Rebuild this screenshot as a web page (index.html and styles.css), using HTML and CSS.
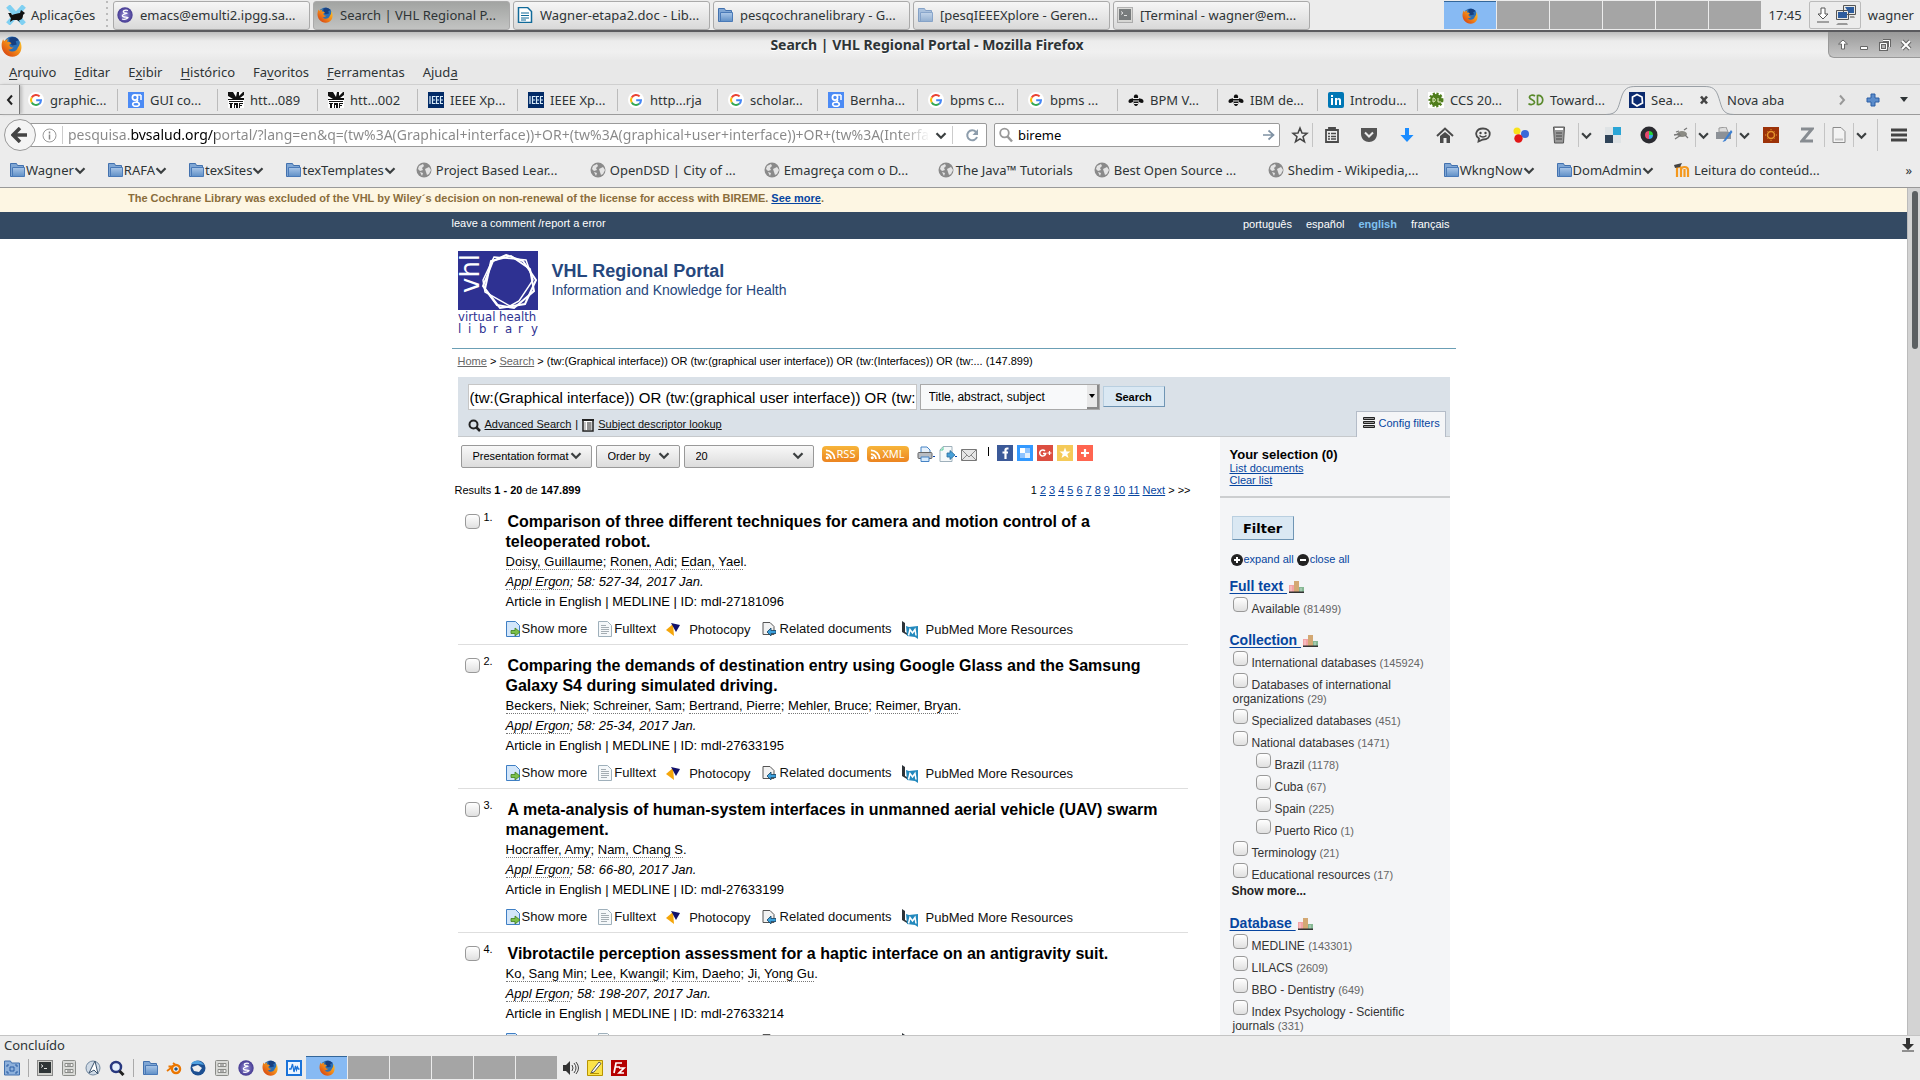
FILE: index.html
```html
<!DOCTYPE html>
<html lang="en">
<head>
<meta charset="utf-8">
<title>Search | VHL Regional Portal</title>
<link rel="stylesheet" href="styles.css">
</head>
<body>
<svg class="defs" aria-hidden="true">
  <defs>
    <linearGradient id="g-fold" x1="0" y1="0" x2="0" y2="1"><stop offset="0" stop-color="#a9c6e8"/><stop offset="1" stop-color="#5f8fc6"/></linearGradient>
    <linearGradient id="g-ff" x1="1" y1="0" x2="0" y2="1"><stop offset="0" stop-color="#ffcf2e"/><stop offset=".5" stop-color="#f08318"/><stop offset="1" stop-color="#cf3210"/></linearGradient>
    <radialGradient id="g-em"><stop offset="0" stop-color="#9a92d8"/><stop offset="1" stop-color="#453a92"/></radialGradient>
  </defs>
  <symbol id="firefox" viewBox="0 0 20 20"><circle cx="10.500" cy="8.500" r="8" fill="#2b6fb5"/><path d="M8 2c3-2 7-1 9 2l-3 1 1 3-4 1-3-2z" fill="#163f80"/><path d="M2 3c-2 4-2 9 1 13 4 5 12 5 15 0 2-3 2-8 0-11 0 3-1 5-2 6-1 4-6 5-9 2 2 0 4-1 5-2-3 0-4-1-4-3l2-1c-1-1-3-2-4-1 0-1 0-2 1-3-2 0-3 1-4 2z" fill="url(#g-ff)"/></symbol>
  <symbol id="folder" viewBox="0 0 16 16"><path d="M1.500 14.500v-13h6l1 2h6v11z" fill="#7fa6d4" stroke="#4271ae"/><path d="M3.500 14.500v-9h12v9z" fill="url(#g-fold)" stroke="#4a7ab8"/></symbol>
  <symbol id="google" viewBox="0 0 16 16"><circle cx="8" cy="8" r="8" fill="#fff"/><g fill="none" stroke-width="2"><path d="M11.600 4.400A5 5 0 0 0 3.700 5.500" stroke="#ea4335"/><path d="M3.700 5.500a5 5 0 0 0 0 5" stroke="#fbbc05"/><path d="M3.700 10.500a5 5 0 0 0 7.500 1.300" stroke="#34a853"/><path d="M8.200 8.200H13a5 5 0 0 1-1.800 3.700" stroke="#4285f4"/></g></symbol>
  <symbol id="scholar" viewBox="0 0 16 16"><path d="M0 0h16v16H0z" fill="#4c8bf5"/><circle cx="7" cy="5.500" r="2.600" fill="none" stroke="#fff" stroke-width="1.700"/><path d="M8.500 3H13M9 7.500c2 2-1 2-1 3.500M13 3v5" stroke="#fff" stroke-width="1.500" fill="none"/><ellipse cx="8" cy="12.300" rx="3.300" ry="2" fill="none" stroke="#fff" stroke-width="1.600"/></symbol>
  <symbol id="inbc" viewBox="0 0 16 16"><path d="M0 0h16v16H0z" fill="#fff"/><path d="M0 0h5l3 5 1-5h2v4l4-4h1v3l-4 3h4v2H0V7h5L0 4zM1 9h14v1H1zM1 11h4v1H4v4H2v-4H1zM6 11h4v5H8v-3H7v3H6zM11 11h4v1h-3v1h2v1h-2v2h-1z" fill="#111"/></symbol>
  <symbol id="ieee" viewBox="0 0 16 16"><path d="M0 0h16v16H0z" fill="#012a66"/><path d="M2 4v8M4.500 4v8M4 4.500h3.500M4 8h3M4 11.500h3.500M8.500 4v8M8 4.500h3M8 8h3M8 11.500h3M12.500 4v8M12 4.500h3M12 8h3M12 11.500h3" stroke="#d6eaf8" stroke-width="1.200"/></symbol>
  <symbol id="bee" viewBox="0 0 16 16"><path d="M8 2.500c2 0 2.500 2 2 3.500l4 1c2 1 2 4 0 4-1.500 0-2.500-1-3.500-1.500 0 2.500-1 4.500-2.500 4.500s-2.500-2-2.500-4.500C4.500 10 3.500 11 2 11c-2 0-2-3 0-4l4-1c-.5-1.500 0-3.500 2-3.500z" fill="#111"/><path d="M5 6.500h6M5 9h6M6 11.500h4" stroke="#ececec"/></symbol>
  <symbol id="linkedin" viewBox="0 0 16 16"><rect width="16" height="16" rx="2" fill="#0077b5"/><path d="M3 6h2v7H3zM3 3h2v2H3zM7 6h2v1c1-2 4-1 4 1v5h-2V9c0-2-2-2-2 0v4H7z" fill="#fff"/></symbol>
  <symbol id="acm" viewBox="0 0 16 16"><path d="M0 0h16v16H0z" fill="#fff"/><circle cx="8" cy="8" r="6" fill="#4f7d1c" stroke="#4f7d1c" stroke-width="3" stroke-dasharray="2 1.500"/><path d="M5 6v4c3 0 3-4 0-4zM10 6v4h3" stroke="#e9f3c4" fill="none"/></symbol>
  <symbol id="sd" viewBox="0 0 16 16"><path d="M7 4C5 2.500 1 3 1.500 5.500 2 8 7 7.500 6.500 10.500 6 13 2 13 .5 11.500M9.500 3.500v9c7 1 7-10 0-9z" fill="none" stroke="#5a8a2c" stroke-width="1.700"/></symbol>
  <symbol id="vhlfav" viewBox="0 0 16 16"><path d="M0 0h16v16H0z" fill="#0b2a6e"/><path d="M8 2.500l5 2.500.5 6L8 14l-4.500-3V5z" fill="none" stroke="#fff" stroke-width="1.700"/></symbol>
  <symbol id="globe" viewBox="0 0 16 16"><circle cx="8" cy="8" r="7.500" fill="#8a8a8a"/><path d="M3 4l4-2 1 2-2 2 1 2-3 1-2-2zM9 7l4-2 2 3-2 4-2 1-1-3zM4 10l3 1-1 3z" fill="#e4e4e4"/></symbol>
  <symbol id="chev" viewBox="0 0 10 8"><path d="M1 2l4 4 4-4" fill="none" stroke="#3b3f40" stroke-width="2"/></symbol>
  <symbol id="moodle" viewBox="0 0 16 16"><path d="M3 15V7c0-3 4-3 4 0v8M7 8c0-4 7-4 7 0v7M10.500 15V7" fill="none" stroke="#f4981d" stroke-width="2.200"/><path d="M0 3l8-2-2 4-5 1z" fill="#444"/></symbol>
  <symbol id="cab" viewBox="0 0 16 16"><rect x="1.500" y=".5" width="13" height="15" rx="1" fill="#d9dad7" stroke="#8a8c88"/><path d="M4 3.500h8v3H4zM4 9.500h8v3H4z" fill="#f4f4f2" stroke="#8a8c88"/><path d="M6 5h4M6 11h4" stroke="#666"/></symbol>
  <symbol id="term" viewBox="0 0 16 16"><rect x=".5" y=".5" width="15" height="15" fill="#d0d0cc" stroke="#888"/><path d="M2 2h12v11H2z" fill="#2e3436"/><path d="M4 4.500l2 1.500-2 1.500M7 8.500h3" stroke="#ddd" fill="none"/></symbol>
  <symbol id="emacs" viewBox="0 0 16 16"><circle cx="8" cy="8" r="7.700" fill="url(#g-em)"/><path d="M11 3.500c-3-1-6 .5-4 2 1 .7 3 .5 3 .7-3 .8-6 2-4 3.500 2 1 4 0 5 1-1 1.500-4 2-6 1.300" fill="none" stroke="#fff" stroke-width="1.300"/></symbol>
  <symbol id="feed" viewBox="0 0 12 12"><circle cx="2.500" cy="9.500" r="1.700" fill="#fff"/><path d="M1 5.500a5.500 5.500 0 0 1 5.500 5.500M1 1.500A9.500 9.500 0 0 1 10.500 11" fill="none" stroke="#fff" stroke-width="2"/></symbol>
  <symbol id="bars" viewBox="0 0 15 12"><path d="M0 4h5v7H0z" fill="#f3a3a6"/><path d="M5 0h5v11H5z" fill="#d3a873"/><path d="M10 6h5v5h-5z" fill="#86b894"/><path d="M2 5v6M12 7v4" stroke="#fff" stroke-opacity=".5"/><path d="M0 10.500h15v1.500H0z" fill="#333"/></symbol>
  <symbol id="more" viewBox="0 0 14 16"><path d="M.5.500h9l4 4v11H.500z" fill="#d3e6fa" stroke="#3f7fc4"/><path d="M5 9.500h4V7l5 4-5 4v-2.500H5z" fill="#7cc04a" stroke="#3f7d1c" stroke-width=".8"/></symbol>
  <symbol id="full" viewBox="0 0 14 16"><path d="M.5.500h9l4 4v11H.500z" fill="#f5f8fa" stroke="#9fb0bb"/><path d="M3 4.500h5M3 6.500h8M3 8.500h8M3 10.500h8M3 12.500h6" stroke="#a4adb3"/></symbol>
  <symbol id="photo" viewBox="0 0 15 14"><path d="M0 7l7-6 1 12z" fill="#f5a60a"/><path d="M5 0l9 2-4 7z" fill="#11116b"/></symbol>
  <symbol id="related" viewBox="0 0 14 14"><path d="M1 .5h7l4 4v8H1z" fill="#f2f2f2" stroke="#555"/><path d="M5 10l4-4v2.500h5v3H9V14z" fill="#3ba0dc" stroke="#143f5e" stroke-width=".8"/></symbol>
  <symbol id="pubmed" viewBox="0 0 16 18"><path d="M0 0l3 2v9l2 1v2l-5-3z" fill="#2d3338"/><path d="M4 5l3 1 9-1v13l-3-2-8-1z" fill="#2389bd"/><path d="M6.500 14.500L8 8.500l2.500 3.500L13 8.500l1 6" fill="none" stroke="#fff" stroke-width="1.500"/></symbol>
</svg>

<header class="panel top-panel">
  <button class="apps"><svg width="20" height="20" viewBox="0 0 20 20"><path d="M2 1l16 18M18 1L2 19" stroke="#7fd0f2" stroke-width="5"/><path d="M2 8h3l1 2c3-1 6-2 8-2l1-3 4 3-2 2c0 4-2 5-4 5l1 2-3-2H7l-3 2 1-4C3 12 4 10 2 8z" fill="#111"/></svg>Aplicações</button>
  <span class="grip"></span>
  <nav class="tasks">
    <button class="task"><svg width="16" height="16"><use href="#emacs"/></svg>emacs@emulti2.ipgg.sa...</button>
    <button class="task current"><svg width="16" height="16"><use href="#firefox"/></svg>Search | VHL Regional P...</button>
    <button class="task"><svg width="16" height="16" viewBox="0 0 16 16"><path d="M1.500.500h9l4 4v11h-13z" fill="#fff" stroke="#106a99" stroke-width="1.500"/><path d="M4 6h8M4 8.500h8M4 11h8M4 13h5" stroke="#106a99"/></svg>Wagner-etapa2.doc - Lib...</button>
    <button class="task"><svg width="16" height="16"><use href="#folder"/></svg>pesqcochranelibrary - G...</button>
    <button class="task"><svg width="16" height="16" class="dim"><use href="#folder"/></svg>[pesqIEEEXplore - Geren...</button>
    <button class="task"><svg width="16" height="16" class="dim"><use href="#term"/></svg>[Terminal - wagner@em...</button>
  </nav>
  <div class="pager"><span class="cell on"><svg width="16" height="16"><use href="#firefox"/></svg></span><span class="cell"></span><span class="cell"></span><span class="cell"></span><span class="cell"></span><span class="cell"></span></div>
  <time>17:45</time>
  <div class="tray">
    <svg width="16" height="18" viewBox="0 0 16 18"><path d="M6 2h4v6h3l-5 5-5-5h3zM2 16h12" fill="#fff" stroke="#555"/></svg>
    <svg width="22" height="22" viewBox="0 0 22 22"><path d="M8.500 1.500h12v9h-12zM1.500 6.500h12v9h-12z" fill="#e8e8e4" stroke="#555"/><path d="M10 3h9v6h-5M3 8h9v6H3z" fill="#2d5c9e"/><path d="M3 19h9l1 2H1zM15 12h4l1 2h-5z" fill="#999"/></svg>
  </div>
  <span>wagner</span>
</header>

<div class="titlebar">
  <svg width="21" height="21"><use href="#firefox"/></svg>
  <h1>Search | VHL Regional Portal - Mozilla Firefox</h1>
  <div class="wincontrols">
    <button aria-label="Shade"><svg width="12" height="12" viewBox="0 0 12 12"><path d="M6 1l4.500 4H7.500v5h-3V5h-3z" fill="#fff" stroke="#666"/></svg></button>
    <button aria-label="Minimize"><svg width="12" height="12" viewBox="0 0 12 12"><path d="M2.500 7.500h7v3h-7z" fill="#fff" stroke="#666"/></svg></button>
    <button aria-label="Restore"><svg width="12" height="12" viewBox="0 0 12 12"><path d="M4 1.500h6.500V8M1.500 4.500h6v6h-6z" fill="none" stroke="#666" stroke-width="3"/><path d="M4 1.500h6.500V8M1.500 4.500h6v6h-6z" fill="none" stroke="#fff"/></svg></button>
    <button aria-label="Close"><svg width="12" height="12" viewBox="0 0 12 12"><path d="M2 2l8 8M10 2l-8 8" stroke="#666" stroke-width="4"/><path d="M2 2l8 8M10 2l-8 8" stroke="#fff" stroke-width="2"/></svg></button>
  </div>
</div>

<nav class="menubar">
  <button><u>A</u>rquivo</button><button><u>E</u>ditar</button><button>E<u>x</u>ibir</button><button><u>H</u>istórico</button><button>Fa<u>v</u>oritos</button><button><u>F</u>erramentas</button><button>Ajud<u>a</u></button>
</nav>

<div class="tabstrip">
  <button class="scroll-left" aria-label="Scroll tabs left"><svg width="8" height="12" viewBox="0 0 8 12"><path d="M6 1.500L2 6l4 4.500" fill="none" stroke="#222" stroke-width="2"/></svg></button>
  <button class="tab"><svg width="16" height="16"><use href="#google"/></svg>graphic...</button>
  <button class="tab"><svg width="16" height="16"><use href="#scholar"/></svg>GUI co...</button>
  <button class="tab"><svg width="16" height="16"><use href="#inbc"/></svg>htt...089</button>
  <button class="tab"><svg width="16" height="16"><use href="#inbc"/></svg>htt...002</button>
  <button class="tab"><svg width="16" height="16"><use href="#ieee"/></svg>IEEE Xp...</button>
  <button class="tab"><svg width="16" height="16"><use href="#ieee"/></svg>IEEE Xp...</button>
  <button class="tab"><svg width="16" height="16"><use href="#google"/></svg>http...rja</button>
  <button class="tab"><svg width="16" height="16"><use href="#google"/></svg>scholar...</button>
  <button class="tab"><svg width="16" height="16"><use href="#scholar"/></svg>Bernha...</button>
  <button class="tab"><svg width="16" height="16"><use href="#google"/></svg>bpms c...</button>
  <button class="tab"><svg width="16" height="16"><use href="#google"/></svg>bpms ...</button>
  <button class="tab"><svg width="16" height="16"><use href="#bee"/></svg>BPM V...</button>
  <button class="tab"><svg width="16" height="16"><use href="#bee"/></svg>IBM de...</button>
  <button class="tab"><svg width="16" height="16"><use href="#linkedin"/></svg>Introdu...</button>
  <button class="tab"><svg width="16" height="16"><use href="#acm"/></svg>CCS 20...</button>
  <button class="tab last"><svg width="16" height="16"><use href="#sd"/></svg>Toward...</button>
  <div class="tab active">
    <svg class="shape" width="128" height="30" viewBox="0 0 128 30"><path d="M0 29.500c12 0 12-7 15-16C18 3 22 1.500 30 1.500h68c8 0 12 1.500 15 12 3 9 3 16 15 16" fill="#ececec" stroke="#9aa0a6"/></svg>
    <svg class="icon" width="16" height="16"><use href="#vhlfav"/></svg><span class="icon">Sea...</span>
    <button class="icon close" aria-label="Close tab"><svg width="10" height="10" viewBox="0 0 10 10"><path d="M2 1.500l6 7M8 1.500l-6 7" stroke="#444" stroke-width="2.600"/></svg></button>
  </div>
  <span class="newtab">Nova aba</span>
  <div class="tab-end">
    <button aria-label="Scroll tabs right"><svg width="8" height="12" viewBox="0 0 8 12"><path d="M2 1.500L6 6l-4 4.500" fill="none" stroke="#999" stroke-width="2"/></svg></button>
    <button aria-label="New tab"><svg width="14" height="14" viewBox="0 0 14 14"><path d="M5 1h4v4h4v4H9v4H5V9H1V5h4z" fill="#5b8ccb" stroke="#2c5fa5"/></svg></button>
    <button aria-label="List tabs"><svg width="8" height="5" viewBox="0 0 8 5"><path d="M0 0h8L4 5z" fill="#2e3436"/></svg></button>
  </div>
</div>

<div class="navbar">
  <button class="back" aria-label="Back"><svg width="18" height="16" viewBox="0 0 18 16"><path d="M9 1L2 8l7 7M3 8h13" fill="none" stroke="#444" stroke-width="3.500"/></svg></button>
  <div class="urlbox">
    <svg width="15" height="15" viewBox="0 0 15 15"><circle cx="7.500" cy="7.500" r="6.500" fill="none" stroke="#999"/><path d="M7.500 3.500v2M7.500 6.500v5" stroke="#888" stroke-width="1.500"/></svg>
    <span class="vline"></span>
    <input class="url" type="text" aria-label="Address" value="pesquisa.bvsalud.org/portal/?lang=en&amp;q=(tw%3A(Graphical+interface))+OR+(tw%3A(graphical+user+interface))+OR+(tw%3A(Interfaces))">
    <svg width="12" height="9"><use href="#chev"/></svg>
    <span class="vline"></span>
    <button aria-label="Reload"><svg width="14" height="14" viewBox="0 0 14 14"><path d="M11 4a5 5 0 1 0 1 5" fill="none" stroke="#8d9dac" stroke-width="2"/><path d="M13 1v6H7.500z" fill="#8d9dac"/></svg></button>
  </div>
  <div class="searchbox">
    <svg width="14" height="16" viewBox="0 0 14 16"><circle cx="5.500" cy="6" r="4.300" fill="none" stroke="#999" stroke-width="1.800"/><path d="M8.500 9.500l4.500 5" stroke="#999" stroke-width="2.500"/></svg>
    <input type="text" aria-label="Search the web" value="bireme">
    <button aria-label="Go"><svg width="12" height="12" viewBox="0 0 12 12"><path d="M0 6h10M5.500 1.500L10.500 6l-5 4.500" fill="none" stroke="#7f91a3" stroke-width="1.700"/></svg></button>
  </div>
  <div class="tools">
    <button class="t26" aria-label="Bookmark"><svg width="18" height="18" viewBox="0 0 18 18"><path d="M9 2l2 5 5 .3-4 3.400 1.500 5L9 12.800 4.500 15.700l1.500-5L2 7.300 7 7z" fill="none" stroke="#444" stroke-width="1.500"/></svg></button>
    <button class="t38 split" aria-label="Bookmarks list"><svg width="16" height="16" viewBox="0 0 16 16"><path d="M2 3h12v12H2zM5 3V1h6v2" fill="none" stroke="#4a4a4a" stroke-width="1.800"/><path d="M4 6.500h2M7 6.500h5M4 9.500h2M7 9.500h5M4 12h2M7 12h5" stroke="#4a4a4a" stroke-width="1.300"/></svg></button>
    <button class="t38" aria-label="Pocket"><svg width="18" height="16" viewBox="0 0 18 16"><path d="M1 1h16v6c0 5-4 8-8 8s-8-3-8-8z" fill="#555"/><path d="M5 5.500l4 4 4-4" fill="none" stroke="#ececec" stroke-width="2"/></svg></button>
    <button class="t38" aria-label="Downloads"><svg width="14" height="16" viewBox="0 0 14 16"><path d="M5 1h4v7h4.500L7 15 .5 8H5z" fill="#1a8cff"/></svg></button>
    <button class="t38" aria-label="Home"><svg width="18" height="16" viewBox="0 0 18 16"><path d="M1 9l8-7.500L17 9" fill="none" stroke="#4a4a4a" stroke-width="2"/><path d="M4 9l5-4 5 4v7h-3.500v-5h-3v5H4z" fill="#4a4a4a"/></svg></button>
    <button class="t38" aria-label="Chat"><svg width="16" height="16" viewBox="0 0 16 16"><path d="M8 1.500c9 0 9 11 0 11l-4.500 2 .5-3C-1 8 1 1.500 8 1.500z" fill="none" stroke="#4a4a4a" stroke-width="1.800"/><circle cx="5.500" cy="6" r="1.200" fill="#444"/><circle cx="10.500" cy="6" r="1.200" fill="#444"/><path d="M4.500 8.500q3.500 3 7 0" fill="none" stroke="#444" stroke-width="1.500"/></svg></button>
    <button class="t38" aria-label="Colours"><svg width="16" height="16" viewBox="0 0 16 16"><circle cx="4" cy="4" r="3.500" fill="#f9e21a"/><circle cx="12" cy="7" r="4" fill="#3a6ad8"/><circle cx="5.500" cy="11.500" r="4.200" fill="#e21717"/></svg></button>
    <button class="t38" aria-label="Toggle"><svg width="14" height="18" viewBox="0 0 14 18"><path d="M1.500 1h11l-1 16h-9z" fill="#999" stroke="#555"/><path d="M3 3h8" stroke="#fff" stroke-width="2"/><path d="M4 7h6M4 10h6M4 13h6" stroke="#444"/></svg></button>
    <button class="drop" aria-label="More"><svg width="11" height="9"><use href="#chev"/></svg></button>
    <button class="t38" aria-label="Delicious"><svg width="16" height="16" viewBox="0 0 16 16"><path d="M8 0h8v8H8z" fill="#2aa5d6"/><path d="M0 8h8v8H0z" fill="#2f4358"/><path d="M0 0h8v8H0zM8 8h8v8H8z" fill="#dfe3e5"/></svg></button>
    <button class="t34" aria-label="Color picker"><svg width="18" height="18" viewBox="0 0 18 18"><circle cx="9" cy="9" r="8.500" fill="#2a2a30"/><circle cx="9" cy="9" r="4" fill="#111"/><path d="M9 9V5a4 4 0 0 1 4 4z" fill="#2ad13a"/><path d="M9 9h4a4 4 0 0 1-4 4z" fill="#35a7ee"/><path d="M9 9v4a4 4 0 0 1 0-8z" fill="#e64a6f"/></svg></button>
    <button class="t30" aria-label="Firebug"><svg width="16" height="16" viewBox="0 0 16 16"><ellipse cx="9" cy="7" rx="5" ry="3" fill="#8b8b84"/><path d="M1 8l6-1M2 12l6-4M11 3l3-2M12 8l3 3M6 4L3 5" stroke="#777" stroke-width="1.300"/></svg></button>
    <button class="drop" aria-label="More"><svg width="11" height="9"><use href="#chev"/></svg></button>
    <button class="t26" aria-label="Print"><svg width="18" height="16" viewBox="0 0 18 16"><path d="M4 1l7-1 2 5H4z" fill="#ddd" stroke="#999"/><path d="M1 5h15v7H1z" fill="#8c9197"/><path d="M16 3l1.500 2-7 9-3 1z" fill="#3c7fd0"/></svg></button>
    <button class="drop" aria-label="More"><svg width="11" height="9"><use href="#chev"/></svg></button>
    <button class="t38" aria-label="Add-on"><svg width="16" height="16" viewBox="0 0 16 16"><path d="M0 0h16v16H0z" fill="#9c3208"/><circle cx="8" cy="8" r="3.500" fill="none" stroke="#e5952c" stroke-width="1.500"/><path d="M8 2v1M8 13v1M2 8h1M13 8h1M4 4l.5.500M12 12l-.5-.500M12 4l-.5.500M4 12l.5-.500" stroke="#e5952c"/></svg></button>
    <button class="t34" aria-label="Zotero"><svg width="14" height="16" viewBox="0 0 14 16"><path d="M1 2h11L2 14h11" fill="none" stroke="#878c91" stroke-width="3"/></svg></button>
    <button class="t30 split" aria-label="Page"><svg width="14" height="16" viewBox="0 0 14 16"><path d="M1 .5h8l4 4v11H1z" fill="#f3f3f3" stroke="#8b8b8b"/><path d="M3 12.500h8" stroke="#c4c4c4" stroke-width="2"/></svg></button>
    <button class="drop" aria-label="More"><svg width="11" height="9"><use href="#chev"/></svg></button>
    <button class="t43 split" aria-label="Menu"><svg width="16" height="14" viewBox="0 0 16 14"><path d="M0 2h16M0 7h16M0 12h16" stroke="#444" stroke-width="3"/></svg></button>
  </div>
</div>

<nav class="bookmarks">
  <button class="dir"><svg width="18" height="16"><use href="#folder"/></svg>Wagner<svg width="12" height="9"><use href="#chev"/></svg></button>
  <button class="dir"><svg width="18" height="16"><use href="#folder"/></svg>RAFA<svg width="12" height="9"><use href="#chev"/></svg></button>
  <button class="dir"><svg width="18" height="16"><use href="#folder"/></svg>texSites<svg width="12" height="9"><use href="#chev"/></svg></button>
  <button class="dir"><svg width="18" height="16"><use href="#folder"/></svg>texTemplates<svg width="12" height="9"><use href="#chev"/></svg></button>
  <a class="mark" href="#"><svg width="16" height="16"><use href="#globe"/></svg>Project Based Lear...</a>
  <a class="mark" href="#"><svg width="16" height="16"><use href="#globe"/></svg>OpenDSD | City of ...</a>
  <a class="mark" href="#"><svg width="16" height="16"><use href="#globe"/></svg>Emagreça com o D...</a>
  <a class="mark short" href="#"><svg width="16" height="16"><use href="#globe"/></svg>The Java™ Tutorials</a>
  <a class="mark" href="#"><svg width="16" height="16"><use href="#globe"/></svg>Best Open Source ...</a>
  <a class="mark" href="#"><svg width="16" height="16"><use href="#globe"/></svg>Shedim - Wikipedia,...</a>
  <button class="dir"><svg width="18" height="16"><use href="#folder"/></svg>WkngNow<svg width="12" height="9"><use href="#chev"/></svg></button>
  <button class="dir"><svg width="18" height="16"><use href="#folder"/></svg>DomAdmin<svg width="12" height="9"><use href="#chev"/></svg></button>
  <a class="mark" href="#"><svg width="16" height="16"><use href="#moodle"/></svg>Leitura do conteúd...</a>
  <button class="overflow">»</button>
</nav>

<div class="viewport">
<div class="page">
  <p class="notice">The Cochrane Library was excluded of the VHL by Wiley´s decision on non-renewal of the license for access with BIREME. <a href="#">See more</a>.</p>
  <div class="topbar"><div class="wrap bar-row">
    <a href="#">leave a comment /report a error</a>
    <nav class="langs"><a href="#">português</a><a href="#">español</a><a href="#" class="sel">english</a><a href="#">français</a></nav>
  </div></div>

  <div class="wrap">
    <div class="brand">
      <svg width="80" height="86" viewBox="0 0 80 86" role="img" aria-label="virtual health library">
        <path d="M0 0h80v59H0z" fill="#2e3192"/>
        <g fill="none" stroke="#fff" stroke-width="2"><path d="M48 4l17 6 13 19-11 24-25 4-17-22 10-25z"/><path d="M36 6l32 3 7 20-14 21-9 5-25-14-2-12z" stroke-width="1.500"/><path d="M53 5l19 13 4 22-20 17-17-3-12-16 6-28z"/></g>
        <text class="logo-v" x="0" y="0" transform="translate(21 42) rotate(-90)">vhl</text>
        <text class="logo-t" x="0" y="70">virtual health</text>
        <text class="logo-t" x="0 10 21 35 47 60 73" y="82">library</text>
      </svg>
      <div><h2>VHL Regional Portal</h2><p>Information and Knowledge for Health</p></div>
    </div>
    <p class="crumbs"><a href="#">Home</a> &gt; <a href="#">Search</a> &gt; <b>(tw:(Graphical interface)) OR (tw:(graphical user interface)) OR (tw:(Interfaces)) OR (tw:... (147.899)</b></p>

    <form class="query">
      <div class="query-row">
        <input type="text" aria-label="Query" value="(tw:(Graphical interface)) OR (tw:(graphical user interface)) OR (tw:(Interfaces))">
        <span class="pick field"><select aria-label="Field"><option>Title, abstract, subject</option></select><span class="arrow"><svg width="6" height="4" viewBox="0 0 6 4"><path d="M0 0h6L3 4z"/></svg></span></span>
        <button type="button" class="go">Search</button>
      </div>
      <div class="query-links">
        <svg width="13" height="13" viewBox="0 0 13 13"><circle cx="5.500" cy="5.500" r="4" fill="none" stroke="#222" stroke-width="2"/><path d="M8 8l4 4" stroke="#222" stroke-width="2.500"/></svg>
        <a href="#">Advanced Search</a><span>|</span>
        <svg width="12" height="13" viewBox="0 0 12 13"><path d="M1 1h10v11H1z" fill="#fff" stroke="#222" stroke-width="1.500"/><path d="M0 1h12" stroke="#222" stroke-width="2"/><path d="M2.500 4h1M5 4h4.500M2.500 6h1M5 6h4.500M2.500 8h1M5 8h4.500M2.500 10h1M5 10h4.500" stroke="#222"/></svg>
        <a href="#">Subject descriptor lookup</a>
      </div>
      <a class="config" href="#"><svg width="12" height="12" viewBox="0 0 12 12"><path d="M.5.500h11v2H.500zM.5 4.500h11v2H.500zM.5 8.500h11v2H.500z" fill="#999" stroke="#222"/></svg>Config filters</a>
    </form>

    <div class="cols">
      <main>
        <div class="options">
          <span class="pick fmt"><select aria-label="Presentation format"><option>Presentation format</option></select><svg width="12" height="9"><use href="#chev"/></svg></span>
          <span class="pick ord"><select aria-label="Order by"><option>Order by</option></select><svg width="12" height="9"><use href="#chev"/></svg></span>
          <span class="pick cnt"><select aria-label="Results per page"><option>20</option></select><svg width="12" height="9"><use href="#chev"/></svg></span>
          <a class="feed" href="#"><svg width="11" height="11"><use href="#feed"/></svg>RSS</a>
          <a class="feed xml" href="#"><svg width="11" height="11"><use href="#feed"/></svg>XML</a>
          <div class="exports">
            <a href="#" aria-label="Print"><svg width="18" height="16" viewBox="0 0 18 16"><path d="M4 7V1h6l3 3v3" fill="#e8f2fc" stroke="#4582c4"/><rect x="1" y="6.500" width="14" height="6" rx="1" fill="#b8bcc2" stroke="#666"/><path d="M4 11h8v4.500H4z" fill="#d6eafc" stroke="#4582c4"/><path d="M16 10.500h2" stroke="#0645ad"/></svg></a>
            <a href="#" aria-label="Export"><svg width="18" height="16" viewBox="0 0 18 16"><path d="M4 .5h9v15H1V4z" fill="#f6f9fa" stroke="#9fb0bb"/><path d="M1 4h3V1" stroke="#5c9" fill="none"/><path d="M8 7h3V4.500L16 9l-5 4.500V11H8z" fill="#48a0d8" stroke="#2b6d9c" stroke-width=".8"/><path d="M16 10.500h2" stroke="#0645ad"/></svg></a>
            <a href="#" aria-label="E-mail"><svg width="16" height="16" viewBox="0 0 16 16"><path d="M.5 3.500h15v11H.500z" fill="#e6e6e6" stroke="#777"/><path d="M1 4l7 7 7-7M1 14l5-5M15 14l-5-5" fill="none" stroke="#888"/></svg></a>
          </div>
          <span class="pipe"></span>
          <div class="share">
            <a href="#" aria-label="Facebook"><svg width="16" height="16" viewBox="0 0 16 16"><path d="M0 0h16v16H0z" fill="#3b5998"/><path d="M11.500 3.500H10c-1 0-1.500.5-1.500 1.500v9M5.500 7.500h5.500" fill="none" stroke="#fff" stroke-width="2.200"/></svg></a>
            <a href="#" aria-label="Delicious"><svg width="16" height="16" viewBox="0 0 16 16"><path d="M0 0h16v16H0z" fill="#39f"/><path d="M3 3h5v5H3z" fill="#fff"/><path d="M8 3h5v5H8zM3 8h5v5H3z" fill="#8fc4ff"/><path d="M8 8h5v5H8z" fill="#e3effc"/></svg></a>
            <a href="#" aria-label="Google Plus"><svg width="16" height="16" viewBox="0 0 16 16"><path d="M0 0h16v16H0z" fill="#dc4e41"/><path d="M8 6a3 3 0 1 0 .7 2.500H6" fill="none" stroke="#fff" stroke-width="1.500"/><path d="M10.500 8h4M12.500 6v4" stroke="#fff" stroke-width="1.200"/></svg></a>
            <a href="#" aria-label="Favorites"><svg width="16" height="16" viewBox="0 0 16 16"><path d="M0 0h16v16H0z" fill="#f5ca59"/><path d="M8 2.500l1.500 4h4L10.300 9l1.200 4L8 10.700 4.500 13l1.200-4L2.500 6.500h4z" fill="#fff"/></svg></a>
            <a href="#" aria-label="More"><svg width="16" height="16" viewBox="0 0 16 16"><path d="M0 0h16v16H0z" fill="#ff6550"/><path d="M4 8h8M8 4v8" stroke="#fff" stroke-width="2.200"/></svg></a>
          </div>
        </div>
        <div class="counts">
          <span>Results <b>1 - 20</b> de <b>147.899</b></span>
          <nav class="pages"><span>1</span><a href="#">2</a><a href="#">3</a><a href="#">4</a><a href="#">5</a><a href="#">6</a><a href="#">7</a><a href="#">8</a><a href="#">9</a><a href="#">10</a><a href="#">11</a><a href="#">Next</a><span>&gt; &gt;&gt;</span></nav>
        </div>

        <article>
          <input type="checkbox" id="r1"><label for="r1">1.</label>
          <div class="rec">
            <h3>Comparison of three different techniques for camera and motion control of a teleoperated robot.</h3>
            <p><a href="#">Doisy, Guillaume</a>; <a href="#">Ronen, Adi</a>; <a href="#">Edan, Yael</a>.</p>
            <p><i><a href="#">Appl Ergon</a>; 58: 527-34, 2017 Jan.</i></p>
            <p>Article in English | MEDLINE | ID: mdl-27181096</p>
            <div class="acts"><a href="#"><svg width="14" height="16"><use href="#more"/></svg>Show more</a><a href="#"><svg width="14" height="16"><use href="#full"/></svg>Fulltext</a><a href="#" class="low"><svg width="15" height="14"><use href="#photo"/></svg>Photocopy</a><a href="#" class="rel"><svg width="14" height="14"><use href="#related"/></svg>Related documents</a><a href="#" class="low"><svg width="16" height="18"><use href="#pubmed"/></svg>PubMed More Resources</a></div>
          </div>
        </article>
        <article>
          <input type="checkbox" id="r2"><label for="r2">2.</label>
          <div class="rec">
            <h3>Comparing the demands of destination entry using Google Glass and the Samsung Galaxy S4 during simulated driving.</h3>
            <p><a href="#">Beckers, Niek</a>; <a href="#">Schreiner, Sam</a>; <a href="#">Bertrand, Pierre</a>; <a href="#">Mehler, Bruce</a>; <a href="#">Reimer, Bryan</a>.</p>
            <p><i><a href="#">Appl Ergon</a>; 58: 25-34, 2017 Jan.</i></p>
            <p>Article in English | MEDLINE | ID: mdl-27633195</p>
            <div class="acts"><a href="#"><svg width="14" height="16"><use href="#more"/></svg>Show more</a><a href="#"><svg width="14" height="16"><use href="#full"/></svg>Fulltext</a><a href="#" class="low"><svg width="15" height="14"><use href="#photo"/></svg>Photocopy</a><a href="#" class="rel"><svg width="14" height="14"><use href="#related"/></svg>Related documents</a><a href="#" class="low"><svg width="16" height="18"><use href="#pubmed"/></svg>PubMed More Resources</a></div>
          </div>
        </article>
        <article>
          <input type="checkbox" id="r3"><label for="r3">3.</label>
          <div class="rec">
            <h3>A meta-analysis of human-system interfaces in unmanned aerial vehicle (UAV) swarm management.</h3>
            <p><a href="#">Hocraffer, Amy</a>; <a href="#">Nam, Chang S</a>.</p>
            <p><i><a href="#">Appl Ergon</a>; 58: 66-80, 2017 Jan.</i></p>
            <p>Article in English | MEDLINE | ID: mdl-27633199</p>
            <div class="acts"><a href="#"><svg width="14" height="16"><use href="#more"/></svg>Show more</a><a href="#"><svg width="14" height="16"><use href="#full"/></svg>Fulltext</a><a href="#" class="low"><svg width="15" height="14"><use href="#photo"/></svg>Photocopy</a><a href="#" class="rel"><svg width="14" height="14"><use href="#related"/></svg>Related documents</a><a href="#" class="low"><svg width="16" height="18"><use href="#pubmed"/></svg>PubMed More Resources</a></div>
          </div>
        </article>
        <article>
          <input type="checkbox" id="r4"><label for="r4">4.</label>
          <div class="rec">
            <h3>Vibrotactile perception assessment for a haptic interface on an antigravity suit.</h3>
            <p><a href="#">Ko, Sang Min</a>; <a href="#">Lee, Kwangil</a>; <a href="#">Kim, Daeho</a>; <a href="#">Ji, Yong Gu</a>.</p>
            <p><i><a href="#">Appl Ergon</a>; 58: 198-207, 2017 Jan.</i></p>
            <p>Article in English | MEDLINE | ID: mdl-27633214</p>
            <div class="acts"><a href="#"><svg width="14" height="16"><use href="#more"/></svg>Show more</a><a href="#"><svg width="14" height="16"><use href="#full"/></svg>Fulltext</a><a href="#" class="low"><svg width="15" height="14"><use href="#photo"/></svg>Photocopy</a><a href="#" class="rel"><svg width="14" height="14"><use href="#related"/></svg>Related documents</a><a href="#" class="low"><svg width="16" height="18"><use href="#pubmed"/></svg>PubMed More Resources</a></div>
          </div>
        </article>
      </main>

      <aside>
        <section class="selection">
          <h4>Your selection (0)</h4>
          <a href="#">List documents</a>
          <a href="#">Clear list</a>
        </section>
        <section class="filters">
          <button type="button" class="filter-btn">Filter</button>
          <p class="toggles"><svg width="12" height="12" viewBox="0 0 12 12"><circle cx="6" cy="6" r="6" fill="#222"/><path d="M3 6h6M6 3v6" stroke="#fff" stroke-width="2"/></svg><a href="#">expand all</a><svg width="12" height="12" viewBox="0 0 12 12"><circle cx="6" cy="6" r="6" fill="#222"/><path d="M3 6h6" stroke="#fff" stroke-width="2"/></svg><a href="#">close all</a></p>
          <h5><a href="#">Full text </a><svg width="15" height="12"><use href="#bars"/></svg></h5>
          <ul><li><input type="checkbox" id="f1"><label for="f1">Available <small>(81499)</small></label></li></ul>
          <h5><a href="#">Collection </a><svg width="15" height="12"><use href="#bars"/></svg></h5>
          <ul>
            <li><input type="checkbox" id="c1"><label for="c1">International databases <small>(145924)</small></label></li>
            <li><input type="checkbox" id="c2"><label for="c2">Databases of international organizations <small>(29)</small></label></li>
            <li><input type="checkbox" id="c3"><label for="c3">Specialized databases <small>(451)</small></label></li>
            <li><input type="checkbox" id="c4"><label for="c4">National databases <small>(1471)</small></label></li>
            <li class="sub"><input type="checkbox" id="c5"><label for="c5">Brazil <small>(1178)</small></label></li>
            <li class="sub"><input type="checkbox" id="c6"><label for="c6">Cuba <small>(67)</small></label></li>
            <li class="sub"><input type="checkbox" id="c7"><label for="c7">Spain <small>(225)</small></label></li>
            <li class="sub"><input type="checkbox" id="c8"><label for="c8">Puerto Rico <small>(1)</small></label></li>
            <li><input type="checkbox" id="c9"><label for="c9">Terminology <small>(21)</small></label></li>
            <li><input type="checkbox" id="c10"><label for="c10">Educational resources <small>(17)</small></label></li>
          </ul>
          <a class="show-more" href="#">Show more...</a>
          <h5><a href="#">Database </a><svg width="15" height="12"><use href="#bars"/></svg></h5>
          <ul>
            <li><input type="checkbox" id="d1"><label for="d1">MEDLINE <small>(143301)</small></label></li>
            <li><input type="checkbox" id="d2"><label for="d2">LILACS <small>(2609)</small></label></li>
            <li><input type="checkbox" id="d3"><label for="d3">BBO - Dentistry <small>(649)</small></label></li>
            <li><input type="checkbox" id="d4"><label for="d4">Index Psychology - Scientific journals <small>(331)</small></label></li>
          </ul>
        </section>
      </aside>
    </div>
  </div>
</div>
<div class="scrollbar"><span class="thumb"></span></div>
</div>

<div class="statusbar"><span>Concluído</span><svg width="14" height="14" viewBox="0 0 14 14"><path d="M5 0h4v6h4l-6 6-6-6h4z" fill="#333"/><path d="M1 13h12" stroke="#333"/></svg></div>

<footer class="panel bottom-panel">
  <div class="launchers">
    <svg width="16" height="16" viewBox="0 0 16 16"><path d="M.5 15V1h6l1 2h8v12z" fill="#8db0db" stroke="#4271ae"/><path d="M3 7V5h2M11 5h2v2M3 11v2h2M13 11v2h-2M6 7h4v4H6z" fill="none" stroke="#2c5fa5"/></svg>
    <span class="sep"></span>
    <svg width="16" height="16"><use href="#term"/></svg>
    <svg width="16" height="16"><use href="#cab"/></svg>
    <svg width="16" height="16" viewBox="0 0 16 16"><circle cx="8" cy="8" r="7" fill="#cfdae6" stroke="#7389a0"/><path d="M10 1l3 13-4-4-5 3z" fill="#fff" stroke="#38506a"/></svg>
    <svg width="16" height="16" viewBox="0 0 16 16"><circle cx="7" cy="7" r="5" fill="#e3eefb" stroke="#28387f" stroke-width="2.500"/><path d="M10.500 11l4 4" stroke="#222" stroke-width="3"/></svg>
    <span class="sep"></span>
    <svg width="16" height="16"><use href="#folder"/></svg>
    <svg width="16" height="16" viewBox="0 0 16 16"><path d="M1 11l6-4.500H2.500M7 3l4 3" fill="none" stroke="#ea7600" stroke-width="1.800"/><circle cx="10" cy="9" r="4" fill="#fff" stroke="#ea7600" stroke-width="2.500"/><circle cx="10" cy="9" r="1.800" fill="#265787"/></svg>
    <svg width="16" height="16" viewBox="0 0 16 16"><circle cx="8" cy="8" r="7.500" fill="#1c4f91"/><path d="M2 7l6-2 4 3-3 4-5-1z" fill="#eee"/><path d="M1 4c3-5 10-4 13 1l-5-1z" fill="#4fa0e0"/></svg>
    <svg width="16" height="16"><use href="#cab"/></svg>
    <svg width="16" height="16"><use href="#emacs"/></svg>
    <svg width="16" height="16"><use href="#firefox"/></svg>
    <svg width="16" height="16" viewBox="0 0 16 16"><path d="M1 1h14v14H1z" fill="#eef6ff" stroke="#1a73d9" stroke-width="2"/><path d="M3 9h2l1.500-5L8 12l1.500-6 1 4 1-3 1 2h1" fill="none" stroke="#1a73d9" stroke-width="1.300"/></svg>
  </div>
  <div class="pager small"><span class="cell on"><svg width="16" height="16"><use href="#firefox"/></svg></span><span class="cell"></span><span class="cell"></span><span class="cell"></span><span class="cell"></span><span class="cell"></span></div>
  <div class="launchers">
    <svg width="16" height="16" viewBox="0 0 16 16"><path d="M0 5h3l4-4v14l-4-4H0z" fill="#333"/><path d="M9 5q2 3 0 6M11 3q4 5 0 10M13 2q5 6 0 12" fill="none" stroke="#444"/></svg>
    <svg width="16" height="16" viewBox="0 0 16 16"><path d="M.5.500h15v15H.500z" fill="#fbe34a" stroke="#b89400"/><path d="M5 11l7-9 2 1.500-7 8.500-3 1z" fill="#fff" stroke="#555"/><path d="M3 13.500h9" stroke="#b89400"/></svg>
    <svg width="16" height="16" viewBox="0 0 16 16"><path d="M0 0h16v16H0z" fill="#b50000"/><path d="M3 13l2-10h6M4 7h5M8 8h5l-5 5h5" fill="none" stroke="#fff" stroke-width="1.700"/></svg>
  </div>
</footer>
</body>
</html>
```
FILE: styles.css
```css
* { box-sizing: border-box; }
html, body { height: 100%; }
body {
  margin: 0;
  display: flex;
  flex-direction: column;
  overflow: hidden;
  background: #ececec;
  color: #2e3436;
  font: 13px/18px "Noto Sans", "Open Sans", sans-serif;
}
h1, h2, h3, h4, h5, p, ul { margin: 0; padding: 0; }
ul { list-style: none; }
svg { display: block; flex: none; }
button, input, select { font: inherit; color: inherit; margin: 0; }
button { background: none; border: 0; padding: 0; white-space: nowrap; }
.defs { position: absolute; width: 0; height: 0; }
.dim { opacity: .6; }

/* desktop panels */
.panel { display: flex; align-items: center; flex: none; background: #ececec; }
.top-panel { height: 32px; padding: 0 6px; border-bottom: 2px solid #5a5a5e; }
.apps { display: flex; align-items: center; gap: 5px; width: 100px; }
.grip { width: 2px; height: 28px; margin-right: 5px; background: repeating-linear-gradient(#bbb 0 2px, transparent 2px 6px); }
.tasks { display: flex; flex: 1; gap: 3px; min-width: 0; }
.task {
  display: flex;
  align-items: center;
  gap: 7px;
  flex: 0 1 197px;
  height: 29px;
  padding: 0 3px 1px;
  overflow: hidden;
  border: 1px solid #aaa;
  border-radius: 3px;
  background: linear-gradient(#f6f6f6, #d9d9d9);
}
.task.current { background: linear-gradient(#a2a4a2, #c2c3c2); }
.pager { display: flex; gap: 1px; height: 28px; margin-right: 8px; }
.cell { width: 52px; background: #a5a5a5; }
.cell.on { display: grid; place-items: center; background: #87baf3; border-top: 1px solid #336699; }
.tray { display: flex; align-items: center; gap: 4px; height: 28px; margin: 0 7px; padding: 0 3px 0 5px; border: 1px solid #bbb; border-radius: 2px; }
.bottom-panel { height: 25px; padding: 0 4px; }
.launchers { display: flex; align-items: center; gap: 8px; }
.sep { width: 1px; height: 18px; background: #aaa; }
.pager.small { height: 23px; margin: 0 6px 0 4px; }
.pager.small .cell { width: 41px; }

/* window frame */
.titlebar { display: flex; align-items: center; flex: none; height: 28px; background: linear-gradient(#bdbdbd, #ececec 9px, #f0f0f0 20px, #e9e9e9); padding-left: 1px; }
.titlebar h1 { flex: 1; font-size: 14px; line-height: 20px; text-align: center; text-shadow: 0 1px #fff; padding: 0 0 2px 4px; }
.wincontrols { display: flex; justify-content: space-around; align-items: center; align-self: flex-start; width: 92px; height: 26px; padding: 0 4px; background: linear-gradient(#999, #c6c6c6); border: 1px solid #999; border-width: 0 0 1px 1px; border-bottom-left-radius: 6px; }
.menubar { display: flex; gap: 18px; flex: none; height: 25px; padding: 0 9px 1px; background: #e8e8e8; border-bottom: 1px solid #cfcfcf; }
.menubar u { text-underline-offset: 2px; }

/* browser tabs */
.tabstrip { display: flex; align-items: center; flex: none; height: 30px; background: #e9e9e9; border-bottom: 1px solid #9b9b9b; }
.scroll-left { display: flex; align-items: center; justify-content: center; width: 20px; height: 29px; margin-right: -2px; border-right: 1px solid #777; box-shadow: 2px 0 3px #bbb; }
.tab { display: flex; align-items: center; gap: 6px; flex: 0 1 100px; min-width: 0; height: 22px; padding-left: 10px; border-right: 1px solid #bbb; }
.tab.last { border-right: 0; }
.tab.active { position: relative; flex: 0 0 128px; height: 30px; margin: 0 -7px -1px -12px; padding-left: 23px; border: 0; }
.shape { position: absolute; left: 0; top: 0; }
.icon { position: relative; }
.close { margin-left: auto; padding-right: 25px; }
.tab-end { display: flex; gap: 20px; margin-left: auto; padding-right: 12px; align-items: center; }

/* navigation bar */
.navbar { display: flex; align-items: center; flex: none; height: 40px; padding-left: 4px; }
.back { position: relative; display: grid; place-items: center; flex: none; width: 32px; height: 32px; border: 1px solid #999; border-radius: 50%; background: #f4f4f4; }
.urlbox, .searchbox { display: flex; align-items: center; height: 24px; background: #fff; border: 1px solid #9a9a9a; border-radius: 2px; }
.urlbox { flex: 1; margin-left: -8px; padding-left: 13px; gap: 5px; min-width: 0; }
.urlbox button { width: 28px; display: grid; place-items: center; }
.vline { width: 1px; height: 18px; background: #ccc; }
.url {
  flex: 1;
  min-width: 0;
  border: 0;
  padding: 0;
  outline: 0;
  font-size: 14px;
  color: #888;
  -webkit-text-fill-color: transparent;
  background: linear-gradient(90deg, #888 0 63px, #000 63px 147px, #888 147px calc(100% - 30px), transparent);
  -webkit-background-clip: text;
  background-clip: text;
}
.searchbox { flex: 0 0 286px; margin: 0 7px; padding: 0 4px; gap: 5px; color: #000; }
.searchbox input { flex: 1; min-width: 0; border: 0; padding: 0; background: none; }
.tools { display: flex; align-items: center; flex: none; }
.tools button { display: flex; align-items: center; justify-content: center; height: 24px; }
.tools .t26 { width: 25px; }
.tools .t30 { width: 29px; }
.tools .t34 { width: 34px; }
.tools .t38 { width: 38px; }
.tools .t43 { width: 43px; height: 32px; margin-left: 8px; }
.tools .split, .tools .drop { border-left: 1px solid #c4c4c4; }
.tools .drop { width: 16px; }

/* bookmarks */
.bookmarks { display: flex; align-items: center; flex: none; height: 33px; padding: 0 8px 2px; gap: 20px; border-bottom: 1px solid #999; }
.bookmarks > * { display: flex; align-items: center; white-space: nowrap; color: inherit; text-decoration: none; }
.mark { width: 154px; gap: 4px; }
.mark.short { width: 136px; gap: 2px; }
.overflow { margin-left: auto; }

/* web page */
.viewport { display: flex; flex: 1; min-height: 0; overflow: hidden; background: #fff; }
.page { flex: 1; min-width: 0; overflow: hidden; color: #000; font: 11px/14px "Liberation Sans", Arial, sans-serif; }
.scrollbar { flex: none; width: 13px; padding: 3px 2px 0 4px; background: #d3d3d3; border-left: 1px solid #bbb; }
.thumb { display: block; height: 158px; border-radius: 3px; background: #5c6062; }
.page a { color: #0645a0; }
.notice { height: 24px; padding: 3px 128px; background: #fdf6e3; color: #8a6d3b; font-weight: bold; }
.topbar { height: 27px; background: #344a63; }
.wrap { width: 100%; max-width: 1004px; margin: 0 auto; }
.bar-row { display: flex; justify-content: space-between; padding: 4px 6px 0 0; }
.topbar a { color: #fff; text-decoration: none; }
.langs { display: flex; gap: 14px; padding-top: 1px; }
.topbar .sel { color: #7fc1f0; font-weight: bold; }
.brand { display: flex; gap: 14px; height: 110px; padding: 12px 6px 0; border-bottom: 1px solid #6b9fb5; color: #26477d; }
.brand h2 { font-size: 18px; line-height: 20px; padding-top: 10px; }
.brand p { font-size: 14px; line-height: 18px; }
.logo-v { font: 26px "DejaVu Sans", sans-serif; fill: #fff; }
.logo-t { font: 13px "DejaVu Sans Condensed", "DejaVu Sans", sans-serif; fill: #2e3192; }
.crumbs { padding: 5px 6px 9px; }
.crumbs a { color: #666; }
.crumbs b { font-weight: normal; }

.query { position: relative; height: 60px; margin: 0 6px; padding: 7px 10px; background: #dae1e8; border-bottom: 1px solid #c6c9cc; }
.query-row { display: flex; gap: 3px; align-items: center; }
.query-row input { width: 449px; height: 26px; padding: 0 1px; border: 1px solid #c6c6c6; background: #fff; font-size: 15px; }
.pick { position: relative; display: block; }
.pick select { width: 100%; height: 100%; appearance: none; }
.field { width: 180px; height: 26px; }
.field select { padding: 0 8px; background: #f8f9fa; border: 1px solid #a9a9a9; font-size: 12px; }
.arrow { position: absolute; right: 1px; top: 1px; bottom: 1px; width: 12px; display: grid; place-items: center; background: #e8e8e8; border: solid #888; border-width: 0 2px 2px 0; pointer-events: none; }
.go, .filter-btn { background: #dae8f3; border: 1px solid #6f95b4; border-top-color: #b9cfe0; border-left-color: #b9cfe0; font-weight: bold; }
.go { width: 62px; height: 21px; margin-top: -1px; }
.query-links { display: flex; align-items: center; gap: 4px; padding-top: 5px; }
.query-links a { color: #111; }
.query-links svg { margin-top: 4px; }
.config { position: absolute; right: 4px; bottom: -1px; display: flex; gap: 4px; align-items: center; width: 90px; height: 26px; padding: 0 0 3px 6px; background: #f4f5f7; border: 1px solid #b4bcc8; border-bottom: 0; text-decoration: none; }

.cols { display: flex; margin-right: 6px; }
main { flex: 1; min-width: 0; padding: 8px 32px 0 0; }
.options { display: flex; height: 23px; padding-left: 9px; }
.options .pick { height: 23px; margin-right: 4px; }
.options select { padding: 0 11px 1px; border: 1px solid #999; border-radius: 2px; background: linear-gradient(#f8f8f8, #dcdcdc); }
.options .pick svg { position: absolute; right: 10px; top: 6px; pointer-events: none; }
.fmt { width: 131px; }
.ord { width: 84px; }
.cnt { width: 130px; }
.feed { display: flex; align-items: center; justify-content: center; gap: 1px; width: 37px; height: 16px; margin: 1px 8px 0 4px; border-radius: 4px; background: linear-gradient(#f7b53a, #ec8420); }
.page .feed { color: #fff; text-decoration: none; font: 11px/16px "Noto Sans", sans-serif; }
.feed.xml { width: 42px; margin: 1px 8px 0 0; }
.exports { display: flex; gap: 4px; padding-top: 1px; }
.pipe { width: 1px; height: 9px; margin: 2px 8px 0 11px; background: #000; }
.share { display: flex; gap: 4px; }
.counts { display: flex; justify-content: space-between; padding: 15px 0 4px 3px; }
.pages { display: flex; gap: 3px; margin-right: -3px; }

input[type=checkbox] { appearance: none; width: 15px; height: 15px; border: 1px solid #999; border-radius: 4px; background: linear-gradient(#fff, #e0e0e0); }
article { display: flex; align-items: flex-start; margin-left: 6px; border-bottom: 1px solid #dedede; }
article input { flex: none; margin: 13px 4px 0 7px; }
article label { width: 22px; padding-top: 9px; }
.rec { flex: 1; min-width: 0; padding-top: 11px; font-size: 13px; line-height: 20px; }
.rec h3 { font-size: 16px; line-height: 20px; text-indent: 2px; max-width: 660px; }
.rec p a { color: inherit; text-decoration: none; border-bottom: 1px dotted #777; }
.acts { display: flex; align-items: center; height: 32px; padding-top: 2px; }
.acts a { display: flex; align-items: center; gap: 2px; margin-right: 11px; color: #111; text-decoration: none; }
.acts .low { gap: 8px; margin: 1px 11px 0 -1px; }
.acts .rel { gap: 4px; }

aside { width: 230px; flex: none; background: #f4f5f7; }
.selection { padding: 11px 10px 7px; border-bottom: 2px solid #ccced0; height: 61px; line-height: 12px; }
.selection h4 { font-size: 13px; line-height: 14px; }
.selection a { display: table; }
.filters { padding: 18px 10px 0; }
.filter-btn { display: block; width: 62px; height: 24px; margin-left: 2px; font: bold 13px "DejaVu Sans", sans-serif; }
.toggles { display: flex; align-items: center; padding: 13px 0 9px 1px; height: 35px; }
.toggles a { text-decoration: none; margin: -2px 3px 0 1px; }
.filters h5 { display: flex; align-items: center; height: 20px; padding-top: 2px; font-size: 14px; line-height: 18px; white-space: pre; }
.filters h5 svg { margin: 2px 0 0 2px; }
.filters ul { margin: -1px 0 0 3px; padding-bottom: 13px; }
.filters h5 a { text-underline-offset: 2px; }
.filters li { padding-top: 8px; font-size: 12px; line-height: 14px; color: #333; max-width: 200px; }
.filters li input { float: left; margin: -5px 4px 0 0; }
.filters li.sub { padding-left: 23px; }
.filters small { font-size: 11px; color: #666; }
.page .show-more { display: block; margin: -14px 0 11px 2px; font-size: 12px; line-height: 20px; font-weight: bold; color: #222; text-decoration: none; }

.statusbar { display: flex; justify-content: space-between; align-items: center; flex: none; height: 20px; padding: 0 5px 2px 4px; border-top: 1px solid #c4c4c4; }
```
